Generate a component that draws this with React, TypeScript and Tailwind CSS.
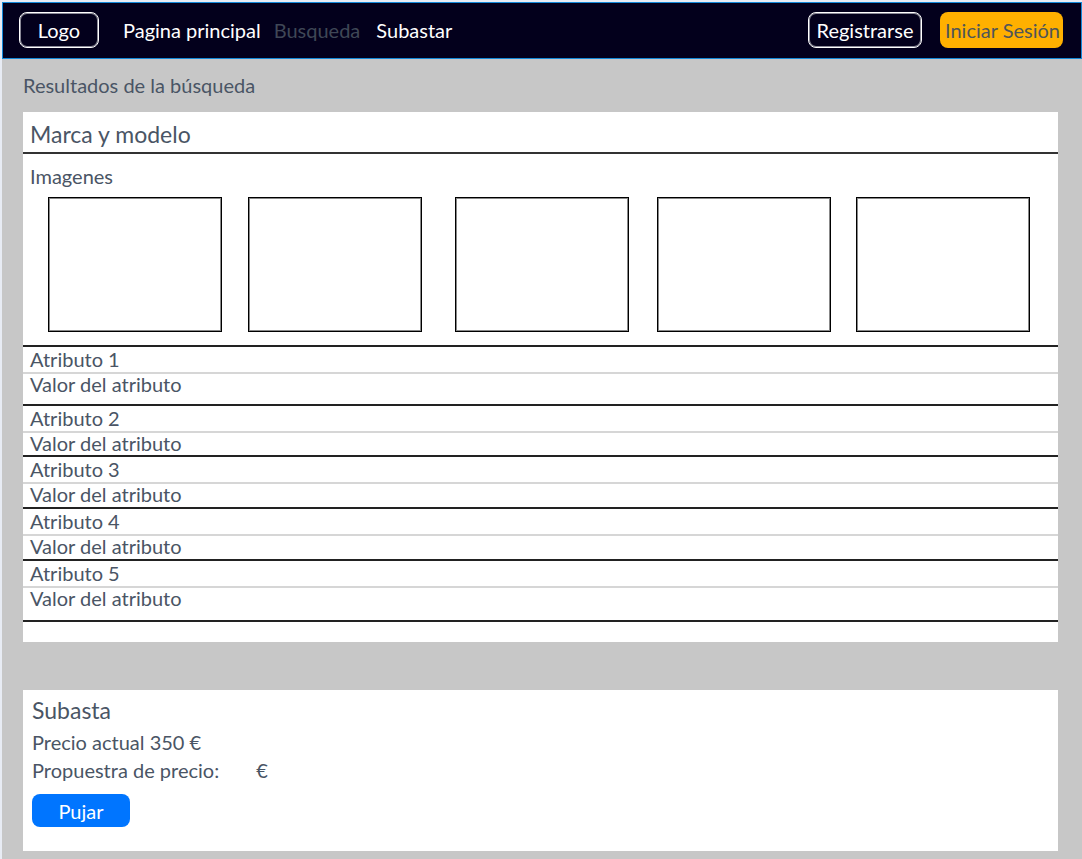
import React from "react";

type Attribute = { name: string; value: string; height: string };

const attributes: Attribute[] = [
  { name: "Atributo 1", value: "Valor del atributo", height: "h-8" },
  { name: "Atributo 2", value: "Valor del atributo", height: "h-6" },
  { name: "Atributo 3", value: "Valor del atributo", height: "h-[25px]" },
  { name: "Atributo 4", value: "Valor del atributo", height: "h-[25px]" },
  { name: "Atributo 5", value: "Valor del atributo", height: "h-[34px]" },
];

const images = [1, 2, 3, 4, 5];

function Header() {
  return (
    <header className="flex h-[57px] items-center border border-[#1489d8] bg-[#03001c] pr-[18px] pb-[2px] pl-4 text-white">
      <a
        href="#"
        className="flex h-9 w-20 items-center justify-center rounded-lg border border-white inset-shadow-[0_0_0_1px_#8a8997]"
      >
        Logo
      </a>
      <nav className="ml-6 flex items-center">
        <a href="#principal">Pagina principal</a>
        <a href="#busqueda" className="ml-[13px] text-[#3f4756]" aria-current="page">
          Busqueda
        </a>
        <a href="#subastar" className="ml-4">
          Subastar
        </a>
      </nav>
      <div className="ml-auto flex gap-[18px]">
        <button
          type="button"
          className="h-9 w-[114px] rounded-lg border border-white whitespace-nowrap inset-shadow-[0_0_0_1px_#8a8997]"
        >
          Registrarse
        </button>
        <button
          type="button"
          className="flex h-9 w-[123px] items-center justify-end rounded-lg bg-[#ffb000] pr-[3px] whitespace-nowrap text-[#4f5559]"
        >
          Iniciar Sesión
        </button>
      </div>
    </header>
  );
}

export default function App() {
  return (
    <div className="min-h-screen bg-[#e8ecf4] pt-[2px] pl-[2px] font-['Lato',sans-serif] text-[20px] leading-6 text-[#4a5565]">
      <div className="min-h-[857px] bg-[#c7c7c7]">
        <Header />
        <main className="pr-6 pb-2 pl-[21px]">
          <h1 className="pt-[14px] pb-[15px]">Resultados de la búsqueda</h1>

          <section className="bg-white pb-5">
            <h2 className="flex h-10 items-center px-[7px] pt-1 text-[23px]">Marca y modelo</h2>
            <div className="border-t-2 border-[#333333] pt-[10px] pb-[13px]">
              <h3 className="px-[7px]">Imagenes</h3>
              <div className="mt-[9px] grid grid-cols-[200fr_207fr_202fr_199fr_174fr] pr-7 pl-[25px]">
                {images.map((n) => (
                  <div
                    key={n}
                    role="img"
                    aria-label={`Imagen ${n}`}
                    className="h-[135px] w-[174px] border border-black inset-shadow-[0_0_0_1px_#888888]"
                  />
                ))}
              </div>
            </div>
            <dl className="border-b-2 border-[#222222]">
              {attributes.map((a) => (
                <div key={a.name}>
                  <dt className="h-[27px] border-t-2 border-[#222222] px-[7px]">{a.name}</dt>
                  <dd className={`border-t-2 border-[#d6d6d6] px-[7px] leading-5 ${a.height}`}>
                    {a.value}
                  </dd>
                </div>
              ))}
            </dl>
          </section>

          <section className="mt-12 bg-white px-[9px] pt-[6px] pb-6">
            <h2 className="text-[23px] leading-7">Subasta</h2>
            <p className="mt-[6px]">Precio actual 350 €</p>
            <form onSubmit={(e) => e.preventDefault()}>
              <div className="mt-1 flex">
                <label htmlFor="propuesta">Propuestra de precio:</label>
                <input
                  id="propuesta"
                  type="text"
                  inputMode="decimal"
                  className="w-[37px] bg-transparent outline-none"
                />
                <span>€</span>
              </div>
              <button
                type="submit"
                className="mt-3 h-[33px] w-[98px] rounded-lg bg-[#0075ff] text-white"
              >
                Pujar
              </button>
            </form>
          </section>
        </main>
      </div>
    </div>
  );
}
